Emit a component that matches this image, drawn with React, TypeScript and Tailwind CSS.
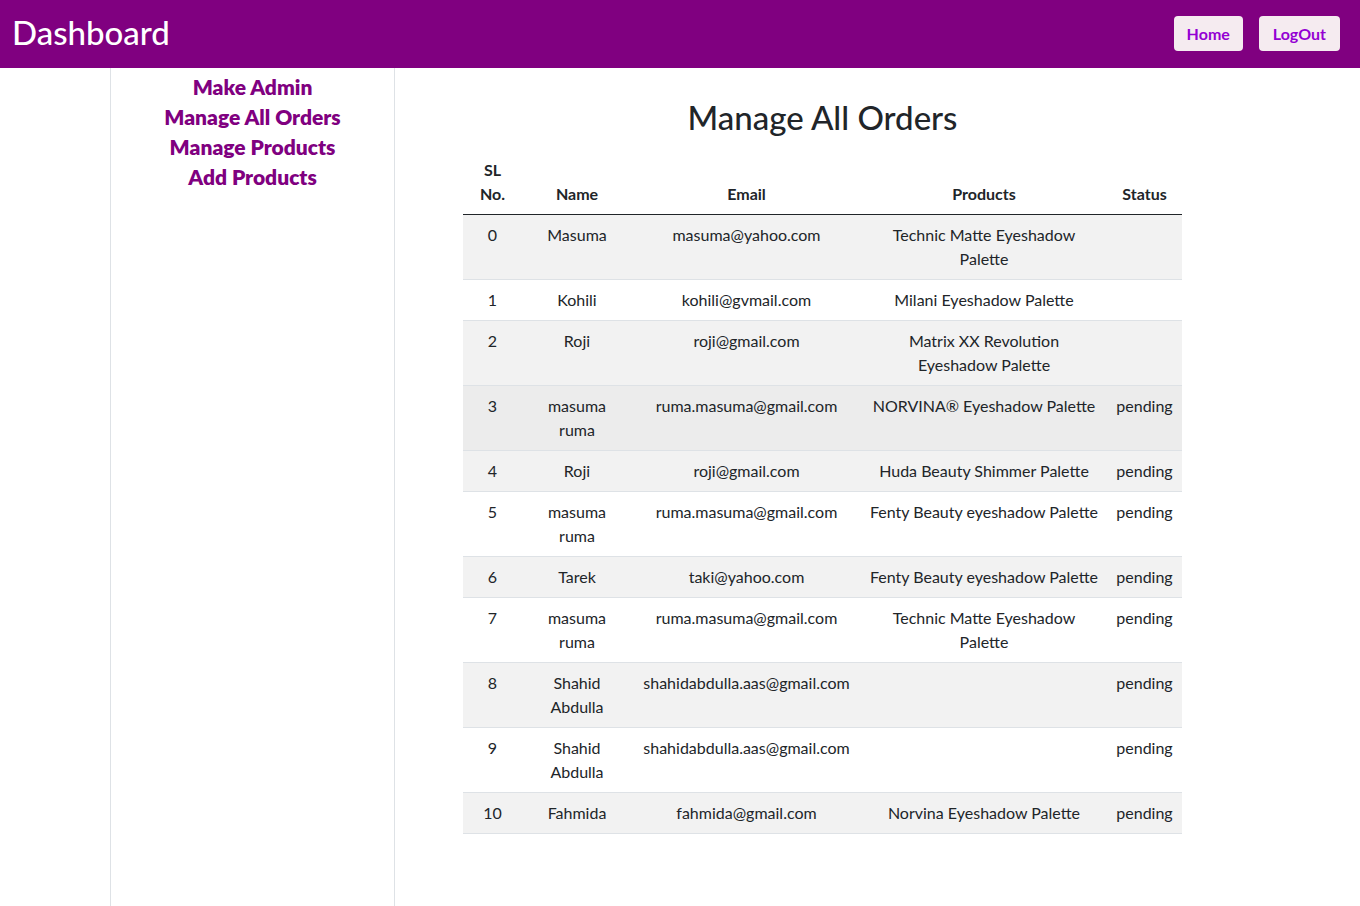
import React from "react";

interface Order {
  sl: number;
  name: string[];
  email: string;
  product: string[];
  status: string;
}

const orders: Order[] = [
  { sl: 0, name: ["Masuma"], email: "masuma@yahoo.com", product: ["Technic Matte Eyeshadow", "Palette"], status: "" },
  { sl: 1, name: ["Kohili"], email: "kohili@gvmail.com", product: ["Milani Eyeshadow Palette"], status: "" },
  { sl: 2, name: ["Roji"], email: "roji@gmail.com", product: ["Matrix XX Revolution", "Eyeshadow Palette"], status: "" },
  { sl: 3, name: ["masuma", "ruma"], email: "ruma.masuma@gmail.com", product: ["NORVINA® Eyeshadow Palette"], status: "pending" },
  { sl: 4, name: ["Roji"], email: "roji@gmail.com", product: ["Huda Beauty Shimmer Palette"], status: "pending" },
  { sl: 5, name: ["masuma", "ruma"], email: "ruma.masuma@gmail.com", product: ["Fenty Beauty eyeshadow Palette"], status: "pending" },
  { sl: 6, name: ["Tarek"], email: "taki@yahoo.com", product: ["Fenty Beauty eyeshadow Palette"], status: "pending" },
  { sl: 7, name: ["masuma", "ruma"], email: "ruma.masuma@gmail.com", product: ["Technic Matte Eyeshadow", "Palette"], status: "pending" },
  { sl: 8, name: ["Shahid", "Abdulla"], email: "shahidabdulla.aas@gmail.com", product: [], status: "pending" },
  { sl: 9, name: ["Shahid", "Abdulla"], email: "shahidabdulla.aas@gmail.com", product: [], status: "pending" },
  { sl: 10, name: ["Fahmida"], email: "fahmida@gmail.com", product: ["Norvina Eyeshadow Palette"], status: "pending" },
];

const Lines = ({ lines }: { lines: string[] }) => (
  <>
    {lines.map((l, i) => (
      <div key={i} className="whitespace-nowrap">
        {l}
      </div>
    ))}
  </>
);

const App: React.FC = () => {
  return (
    <div
      className="min-h-screen bg-white text-[#212529]"
      style={{ fontFamily: "Lato, 'Liberation Sans', sans-serif" }}
    >
      <nav className="h-[68px] bg-[#800080] flex items-start justify-between pl-3 pr-5">
        <h2 className="text-[33px] font-medium text-white leading-[38px] mt-[13px]">Dashboard</h2>
        <div className="flex gap-4 mt-4">
          <button className="h-[35px] px-[13px] rounded bg-[#f5ebf0] text-[#9400d3] font-bold text-base">
            Home
          </button>
          <button className="h-[35px] px-[14px] rounded bg-[#f5ebf0] text-[#9400d3] font-bold text-base">
            LogOut
          </button>
        </div>
      </nav>

      <div className="w-[1140px] mx-auto flex">
        <aside className="w-[285px] min-h-[838px] border-x border-[#dee2e6] pt-1 flex flex-col items-center">
          {["Make Admin", "Manage All Orders", "Manage Products", "Add Products"].map((link) => (
            <a key={link} className="text-[21px] leading-[30px] font-extrabold text-[#800080] cursor-pointer">
              {link}
            </a>
          ))}
        </aside>

        <main className="flex-1">
          <h2 className="text-[33px] font-medium text-center leading-[38px] mt-[30px] mb-[14px]">
            Manage All Orders
          </h2>
          <table className="w-[719px] mx-auto table-fixed border-collapse text-base leading-6">
            <colgroup>
              <col className="w-[59px]" />
              <col className="w-[110px]" />
              <col className="w-[229px]" />
              <col className="w-[246px]" />
              <col className="w-[75px]" />
            </colgroup>
            <thead>
              <tr className="font-extrabold">
                <th className="p-2 align-bottom">
                  SL
                  <br />
                  No.
                </th>
                <th className="p-2 align-bottom">Name</th>
                <th className="p-2 align-bottom">Email</th>
                <th className="p-2 align-bottom">Products</th>
                <th className="p-2 align-bottom">Status</th>
              </tr>
            </thead>
            <tbody className="border-t border-[#212529]">
              {orders.map((o) => (
                <tr
                  key={o.sl}
                  className={
                    "border-b border-[#dee2e6] " +
                    (o.sl === 3 ? "bg-[#ececec]" : o.sl % 2 === 0 ? "bg-[#f2f2f2]" : "bg-white")
                  }
                >
                  <td className="p-2 align-top text-center">{o.sl}</td>
                  <td className="p-2 align-top text-center">
                    <Lines lines={o.name} />
                  </td>
                  <td className="p-2 align-top text-center whitespace-nowrap">{o.email}</td>
                  <td className="p-2 align-top text-center">
                    <Lines lines={o.product} />
                  </td>
                  <td className="p-2 align-top text-center">{o.status}</td>
                </tr>
              ))}
            </tbody>
          </table>
        </main>
      </div>
    </div>
  );
};

export default App;
